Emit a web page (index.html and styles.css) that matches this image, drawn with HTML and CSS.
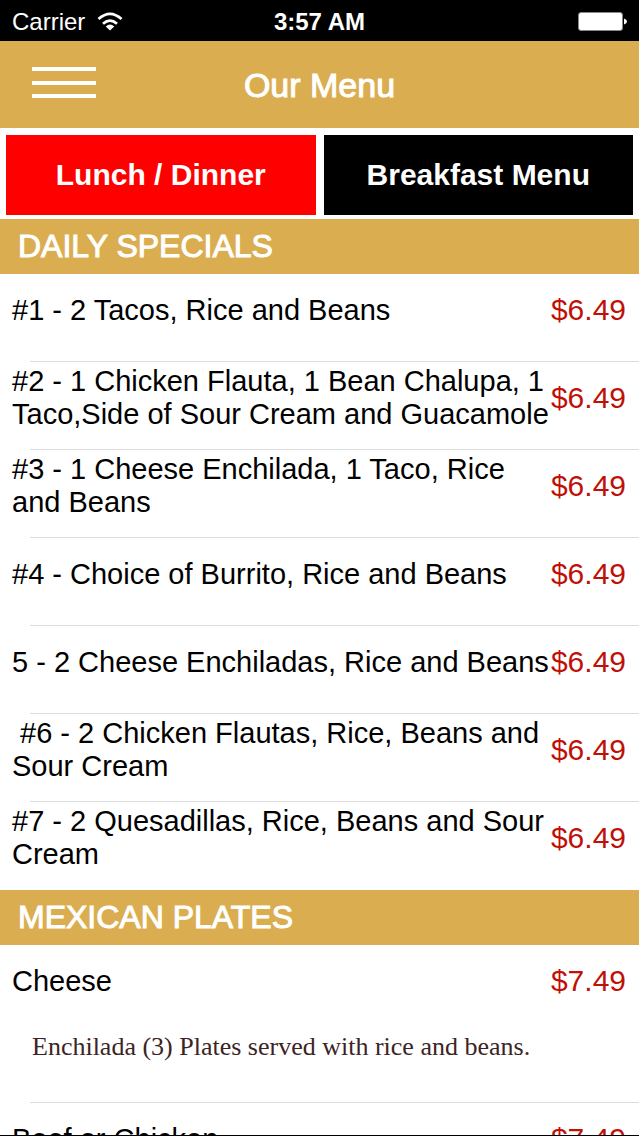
FILE: index.html
```html
<!DOCTYPE html>
<html lang="en">
<head>
<meta charset="utf-8">
<meta name="viewport" content="width=device-width, initial-scale=1">
<title>Our Menu</title>
<link rel="stylesheet" href="styles.css">
</head>
<body>
<div class="screen">
  <div class="status">
    <div class="carrier">
      <span>Carrier</span>
      <svg class="wifi" viewBox="0 0 26 20" aria-hidden="true">
        <path d="M1.500 7Q13-3.200 24.500 7M6 11.700Q13 5.600 20 11.700" fill="none" stroke="#fff" stroke-width="2.800"/>
        <path d="M8.700 14.500Q13 10.700 17.300 14.500L13 18.500Z" fill="#fff"/>
      </svg>
    </div>
    <span class="time">3:57 AM</span>
    <svg class="battery" viewBox="0 0 49 20" aria-hidden="true">
      <rect x="0.500" y="0.500" width="44" height="18" rx="2.500" fill="#fff" stroke="#888"/>
      <path d="M46 6.500Q49 7.500 49 9.500T46 12.500Z" fill="#fff"/>
    </svg>
  </div>
  <header class="nav">
    <button class="menu-button" type="button" aria-label="Open navigation">
      <span class="bar"></span><span class="bar"></span><span class="bar"></span>
    </button>
    <h1 class="title">Our Menu</h1>
  </header>
  <div class="tabs">
    <button class="tab tab-active" type="button">Lunch / Dinner</button>
    <button class="tab" type="button">Breakfast Menu</button>
  </div>
  <main class="menu">
    <h2 class="section">DAILY SPECIALS</h2>
    <ul class="items">
      <li class="item"><span class="name">#1 - 2 Tacos, Rice and Beans</span><span class="price">$6.49</span></li>
      <li class="item"><span class="name">#2 - 1 Chicken Flauta, 1 Bean Chalupa, 1<br>Taco,Side of Sour Cream and Guacamole</span><span class="price">$6.49</span></li>
      <li class="item"><span class="name">#3 - 1 Cheese Enchilada, 1 Taco, Rice<br>and Beans</span><span class="price">$6.49</span></li>
      <li class="item"><span class="name">#4 - Choice of Burrito, Rice and Beans</span><span class="price">$6.49</span></li>
      <li class="item"><span class="name">5 - 2 Cheese Enchiladas, Rice and Beans</span><span class="price">$6.49</span></li>
      <li class="item"><span class="name">&nbsp;#6 - 2 Chicken Flautas, Rice, Beans and<br>Sour Cream</span><span class="price">$6.49</span></li>
      <li class="item"><span class="name">#7 - 2 Quesadillas, Rice, Beans and Sour<br>Cream</span><span class="price">$6.49</span></li>
    </ul>
    <h2 class="section">MEXICAN PLATES</h2>
    <ul class="items">
      <li class="item detailed"><span class="name">Cheese</span><span class="price">$7.49</span>
        <p class="description">Enchilada (3) Plates served with rice and beans.</p></li>
      <li class="item detailed"><span class="name">Beef or Chicken</span><span class="price">$7.49</span></li>
    </ul>
  </main>
</div>
</body>
</html>
```
FILE: styles.css
```css
* { box-sizing: border-box; }

body {
  margin: 0;
  background: #fff;
  color: #000;
  font-family: "Liberation Sans", Arial, sans-serif;
}

.screen {
  display: flex;
  flex-direction: column;
  height: 100vh;
  overflow: hidden;
  border-bottom: 1px solid #000;
}

.status {
  flex: none;
  display: grid;
  grid-template-columns: 1fr auto 1fr;
  align-items: center;
  height: 41px;
  padding: 2px 12px 0;
  background: #000;
  color: #fff;
  font-size: 24px;
}

.carrier { display: flex; align-items: center; gap: 12px; }
.wifi { width: 26px; height: 20px; }
.time { font-weight: bold; }
.battery { width: 49px; height: 20px; justify-self: end; }

.nav {
  flex: none;
  display: grid;
  grid-template-columns: 1fr auto 1fr;
  align-items: center;
  height: 87px;
  padding: 0 32px;
  background: #daae50;
  color: #fff;
}

.menu-button {
  display: flex;
  flex-direction: column;
  justify-content: space-between;
  width: 64px;
  height: 31px;
  margin-bottom: 4px;
  padding: 0;
  border: 0;
  background: none;
}

.bar { width: 100%; height: 4px; background: #fff; }

.title {
  margin: 0;
  font-size: 34px;
  font-weight: normal;
  line-height: 34px;
  -webkit-text-stroke: 1px #fff;
}

.tabs {
  flex: none;
  display: grid;
  grid-template-columns: 1fr 1fr;
  gap: 8px;
  padding: 7px 6px 4px;
}

.tab {
  height: 80px;
  padding: 0;
  border: 0;
  background: #000;
  color: #fff;
  font-family: inherit;
  font-size: 30px;
  font-weight: bold;
}

.tab-active { background: #f00; }

.menu { flex: 1; min-height: 0; overflow: hidden; }

.section {
  margin: 0;
  padding: 0 18px;
  background: #daae50;
  color: #fff;
  font-size: 32px;
  font-weight: normal;
  line-height: 55px;
  -webkit-text-stroke: 1px #fff;
}

.items { margin: 0; padding: 0; list-style: none; }

.item {
  display: grid;
  grid-template-columns: 1fr auto;
  align-items: center;
  height: 88px;
  padding: 0 13px 16px 12px;
  background: linear-gradient(#dcdcdc, #dcdcdc) 30px 100% / 100% 1px no-repeat;
}

.item:last-child { background: none; }
.name { font-size: 29px; line-height: 33px; white-space: nowrap; }
.price { color: #c01008; font-size: 30px; line-height: 34px; }

.detailed {
  align-content: start;
  height: 158px;
  padding-top: 19px;
}

.description {
  grid-column: 1 / -1;
  margin: 34px 0 0 20px;
  color: #3c2424;
  font-family: "Liberation Serif", "Times New Roman", serif;
  font-size: 26px;
  line-height: 30px;
}
```
